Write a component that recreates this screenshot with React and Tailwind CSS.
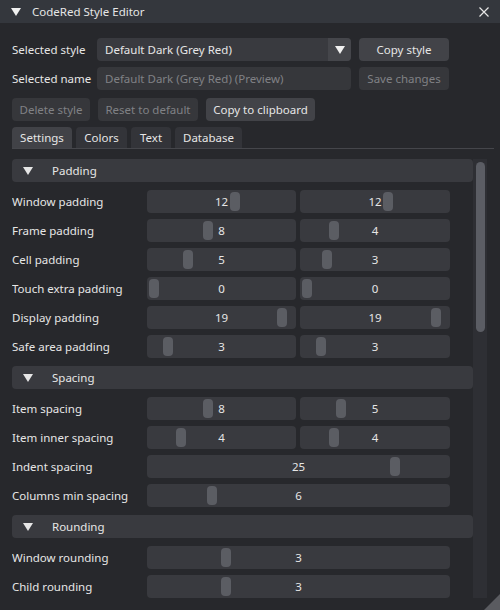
const font = { fontFamily: '"Noto Sans", "Open Sans", sans-serif' }

function Slider({ w, value, grab }) {
  return (
    <div className={`relative h-[23px] rounded-[4px] bg-[#393a3f] flex items-center justify-center ${w}`}>
      <div className="absolute top-[2px] h-[19px] w-[10px] rounded-[4px] bg-[#5b5d63]" style={{ left: grab }} />
      <span className="relative text-[#e6e6e6] pt-[1px]">{value}</span>
    </div>
  )
}

function Row({ label, a, b }) {
  return (
    <div className="flex items-center h-[23px]">
      <div className="w-[135px] text-[#e6e6e6] whitespace-nowrap pt-[1px]">{label}</div>
      {b ? (
        <div className="flex gap-[4px]">
          <Slider w="w-[149px]" value={a[0]} grab={a[1]} />
          <Slider w="w-[150px]" value={b[0]} grab={b[1]} />
        </div>
      ) : (
        <Slider w="w-[303px]" value={a[0]} grab={a[1]} />
      )}
    </div>
  )
}

function Header({ title }) {
  return (
    <div className="h-[23px] rounded-[4px] bg-[#393a3f] flex items-center text-[#e6e6e6]">
      <svg width="10" height="8" viewBox="0 0 10 8" className="ml-[11px]">
        <path d="M0 0 L10 0 L5 8 Z" fill="#e6e6e6" />
      </svg>
      <span className="ml-[19px] pt-[1px]">{title}</span>
    </div>
  )
}

function Btn({ children, disabled, className = '' }) {
  return (
    <div
      className={`h-[23px] rounded-[4px] flex items-center justify-center ${
        disabled ? 'bg-[#36373b] text-[#808185]' : 'bg-[#424348] text-[#e6e6e6]'
      } ${className}`}
    >
      {children}
    </div>
  )
}

export default function App() {
  return (
    <div style={font} className="relative w-[500px] h-[610px] bg-[#27282c] text-[11.5px] overflow-hidden flex flex-col">
      {/* Title bar */}
      <div className="h-[23px] bg-[#34373d] flex items-center shrink-0">
        <svg width="10" height="8" viewBox="0 0 10 8" className="ml-[11px]">
          <path d="M0 0 L10 0 L5 8 Z" fill="#f0f0f0" />
        </svg>
        <span className="ml-[11px] text-[#e6e6e6]">CodeRed Style Editor</span>
        <svg width="10" height="10" viewBox="0 0 10 10" className="ml-auto mr-[11px]">
          <path d="M0.5 0.5 L9.5 9.5 M9.5 0.5 L0.5 9.5" stroke="#e6e6e6" strokeWidth="1.2" />
        </svg>
      </div>

      <div className="pl-[12px] pr-[6px] pt-[15px] flex flex-col">
        <div className="flex items-center h-[23px]">
          <div className="w-[85px] text-[#e6e6e6] whitespace-nowrap pt-[1px]">Selected style</div>
          <div className="w-[254px] h-[23px] rounded-[4px] bg-[#393a3f] flex overflow-hidden">
            <div className="flex-1 flex items-center pl-[8px] text-[#e6e6e6]">Default Dark (Grey Red)</div>
            <div className="w-[23px] bg-[#45464b] flex items-center justify-center">
              <svg width="10" height="8" viewBox="0 0 10 8">
                <path d="M0 0 L10 0 L5 8 Z" fill="#f0f0f0" />
              </svg>
            </div>
          </div>
          <Btn className="ml-[8px] w-[90px] h-[22px]">Copy style</Btn>
        </div>

        <div className="flex items-center h-[23px] mt-[6px]">
          <div className="w-[85px] text-[#e6e6e6] whitespace-nowrap pt-[1px]">Selected name</div>
          <div className="w-[254px] h-[23px] rounded-[4px] bg-[#36373b] flex items-center pl-[8px] text-[#808185]">
            Default Dark (Grey Red) (Preview)
          </div>
          <Btn disabled className="ml-[8px] w-[90px] h-[22px]">Save changes</Btn>
        </div>

        <div className="flex gap-[8px] mt-[8px]">
          <Btn disabled className="w-[78px]">Delete style</Btn>
          <Btn disabled className="w-[100px]">Reset to default</Btn>
          <Btn className="w-[109px]">Copy to clipboard</Btn>
        </div>

        {/* Tabs */}
        <div className="mt-[6px] flex gap-[4px] h-[21px] border-b border-[#45464b] box-content">
          <div className="w-[60px] rounded-t-[4px] bg-[#414247] text-[#e6e6e6] flex items-center justify-center">Settings</div>
          <div className="w-[51px] rounded-t-[4px] bg-[#333439] text-[#e6e6e6] flex items-center justify-center">Colors</div>
          <div className="w-[40px] rounded-t-[4px] bg-[#333439] text-[#e6e6e6] flex items-center justify-center">Text</div>
          <div className="w-[67px] rounded-t-[4px] bg-[#333439] text-[#e6e6e6] flex items-center justify-center">Database</div>
        </div>

        {/* Scroll child */}
        <div className="mt-[10px] flex h-[439px] w-[475px] overflow-hidden">
          <div className="w-[461px] flex flex-col">
            <Header title="Padding" />
            <div className="mt-[8px] flex flex-col gap-[6px]">
              <Row label="Window padding" a={['12', 83]} b={['12', 83]} />
              <Row label="Frame padding" a={['8', 56]} b={['4', 29]} />
              <Row label="Cell padding" a={['5', 36]} b={['3', 22]} />
              <Row label="Touch extra padding" a={['0', 2]} b={['0', 2]} />
              <Row label="Display padding" a={['19', 130]} b={['19', 131]} />
              <Row label="Safe area padding" a={['3', 16]} b={['3', 16]} />
            </div>
            <div className="mt-[8px]"><Header title="Spacing" /></div>
            <div className="mt-[8px] flex flex-col gap-[6px]">
              <Row label="Item spacing" a={['8', 56]} b={['5', 36]} />
              <Row label="Item inner spacing" a={['4', 29]} b={['4', 29]} />
              <Row label="Indent spacing" a={['25', 243]} />
              <Row label="Columns min spacing" a={['6', 60]} />
            </div>
            <div className="mt-[8px]"><Header title="Rounding" /></div>
            <div className="mt-[8px] flex flex-col gap-[6px]">
              <Row label="Window rounding" a={['3', 74]} />
              <Row label="Child rounding" a={['3', 74]} />
            </div>
          </div>
          <div className="w-[14px] bg-[#2e2f34] flex justify-center pt-[3px]">
            <div className="w-[9px] h-[170px] rounded-full bg-[#5b5d64]" />
          </div>
        </div>
      </div>

      {/* Resize grip */}
      <svg width="16" height="16" viewBox="0 0 16 16" className="absolute right-0 bottom-0">
        <path d="M16 0 L16 16 L0 16 Z" fill="#5a5b60" />
      </svg>
    </div>
  )
}
